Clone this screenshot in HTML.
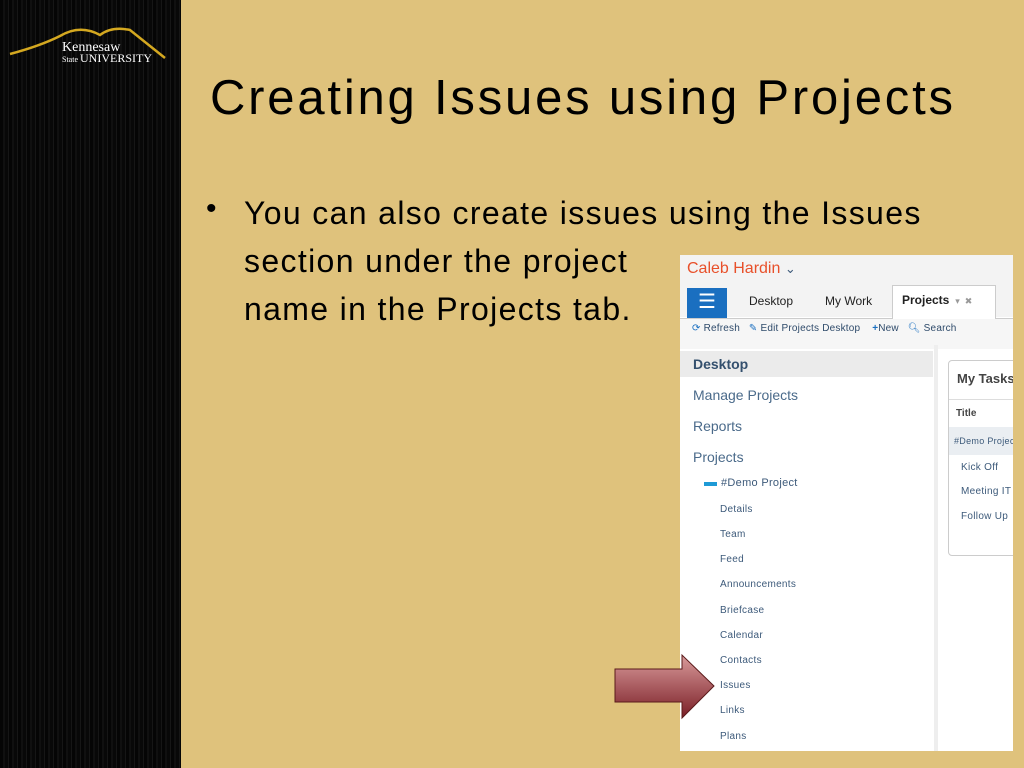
<!DOCTYPE html>
<html><head><style>
body{margin:0;width:1024px;height:768px;background:#dfc27c;position:relative;overflow:hidden;font-family:"Liberation Sans",sans-serif}
.left{position:absolute;left:0;top:0;width:181px;height:768px;background:repeating-linear-gradient(90deg,#050505 0 3px,#101010 3px 5px,#080808 5px 8px,#161616 8px 9px)}
.t{position:absolute;font-family:"Liberation Sans",sans-serif;color:#000}
.ss{position:absolute;left:680px;top:255px;width:333px;height:496px;background:#fff;font-family:"Liberation Sans",sans-serif;overflow:hidden}
.a{position:absolute;white-space:nowrap}
.nav{color:#4a6a8a;font-size:14px}
.sub{color:#3d5a7a;font-size:10px;letter-spacing:0.3px}
</style></head><body>
<div class="left"></div>
<svg style="position:absolute;left:0;top:18px" width="180" height="50">
<path d="M10 36 Q40 28 60 18 Q80 6 100 17 Q112 8 130 12 L165 40" fill="none" stroke="#d4a820" stroke-width="2.5"/>
<text x="62" y="33" fill="#fff" font-family="Liberation Serif" font-size="14">Kennesaw</text>
<text x="62" y="44" fill="#fff" font-family="Liberation Serif" font-size="8">State</text>
<text x="80" y="44" fill="#fff" font-family="Liberation Serif" font-size="12">UNIVERSITY</text>
</svg>
<div class="t" style="left:210px;top:70px;font-size:49px;letter-spacing:2.8px">Creating Issues using Projects</div>
<div class="t" style="left:206px;top:192px;font-size:30px">•</div>
<div class="t" style="left:244px;top:189px;font-size:32px;line-height:48px;letter-spacing:1.35px">You can also create issues using the Issues<br>section under the project<br>name in the Projects tab.</div>
<div class="ss">
 <div class="a" style="left:0;top:0;width:333px;height:62px;background:#f3f3f3"></div>
 <div class="a" style="left:7px;top:5px;color:#e8502a;font-size:16px">Caleb Hardin <span style="color:#3d5a7a;font-size:13px">⌄</span></div>
 <div class="a" style="left:0;top:63px;width:333px;height:1px;background:#ccc"></div>
 <div class="a" style="left:7px;top:33px;width:40px;height:30px;background:#1a6fc0;color:#fff;font-size:20px;text-align:center;line-height:28px">☰</div>
 <div class="a" style="left:69px;top:39px;font-size:12px;color:#222">Desktop</div>
 <div class="a" style="left:145px;top:39px;font-size:12px;color:#222">My Work</div>
 <div class="a" style="left:212px;top:30px;width:102px;height:34px;background:#fff;border:1px solid #ccc;border-bottom:none"></div>
 <div class="a" style="left:222px;top:38px;font-size:12px;font-weight:bold;color:#222">Projects <span style="color:#999;font-weight:normal;font-size:9px">&nbsp;▾ &nbsp;✖</span></div>
 <div class="a" style="left:0;top:64px;width:333px;height:30px;background:#f6f6f6"></div>
 <div class="a" style="left:12px;top:68px;font-size:10px;color:#2e4a6a;letter-spacing:0.2px"><span style="color:#1a6fc0">⟳</span> Refresh &nbsp;&nbsp;<span style="color:#1a6fc0">✎</span> Edit Projects Desktop &nbsp;&nbsp;&nbsp;<b style="color:#1a6fc0">+</b>New &nbsp;&nbsp;<span style="color:#1a6fc0">🔍︎</span> Search</div>
 <div class="a" style="left:0;top:96px;width:253px;height:26px;background:#ebebeb"></div>
 <div class="a" style="left:13px;top:101px;font-size:14px;font-weight:bold;color:#34506e">Desktop</div>
 <div class="a nav" style="left:13px;top:132px">Manage Projects</div>
 <div class="a nav" style="left:13px;top:163px">Reports</div>
 <div class="a nav" style="left:13px;top:194px">Projects</div>
 <div class="a" style="left:24px;top:227px;width:13px;height:4px;background:#1e9ad6"></div>
 <div class="a sub" style="left:41px;top:222px;font-size:11px">#Demo Project</div>
 <div class="a sub" style="left:40px;top:249px">Details</div>
 <div class="a sub" style="left:40px;top:274px">Team</div>
 <div class="a sub" style="left:40px;top:299px">Feed</div>
 <div class="a sub" style="left:40px;top:324px">Announcements</div>
 <div class="a sub" style="left:40px;top:350px">Briefcase</div>
 <div class="a sub" style="left:40px;top:375px">Calendar</div>
 <div class="a sub" style="left:40px;top:400px">Contacts</div>
 <div class="a sub" style="left:40px;top:425px">Issues</div>
 <div class="a sub" style="left:40px;top:450px">Links</div>
 <div class="a sub" style="left:40px;top:476px">Plans</div>
 <div class="a" style="left:254px;top:90px;width:4px;height:406px;background:#eee"></div>
 <div class="a" style="left:268px;top:105px;width:80px;height:194px;border:1px solid #ccc;border-radius:4px;background:#fff"></div>
 <div class="a" style="left:277px;top:116px;font-size:13px;font-weight:bold;color:#444">My Tasks</div>
 <div class="a" style="left:269px;top:144px;width:70px;height:1px;background:#ddd"></div>
 <div class="a" style="left:276px;top:153px;font-size:10px;font-weight:bold;color:#444">Title</div>
 <div class="a" style="left:269px;top:172px;width:70px;height:28px;background:#eaeef2"></div>
 <div class="a sub" style="left:274px;top:181px;font-size:9px">#Demo Project</div>
 <div class="a sub" style="left:281px;top:207px">Kick Off</div>
 <div class="a sub" style="left:281px;top:231px">Meeting IT</div>
 <div class="a sub" style="left:281px;top:256px">Follow Up</div>
</div>
<svg style="position:absolute;left:612px;top:652px" width="110" height="72">
<defs><linearGradient id="g" x1="0" y1="0" x2="0" y2="1"><stop offset="0" stop-color="#d99b9b"/><stop offset="1" stop-color="#7a1e26"/></linearGradient></defs>
<path d="M3 17 L70 17 L70 3 L102 34 L70 66 L70 50 L3 50 Z" fill="url(#g)" stroke="#5a1a1a" stroke-width="1"/>
</svg>
</body></html>
